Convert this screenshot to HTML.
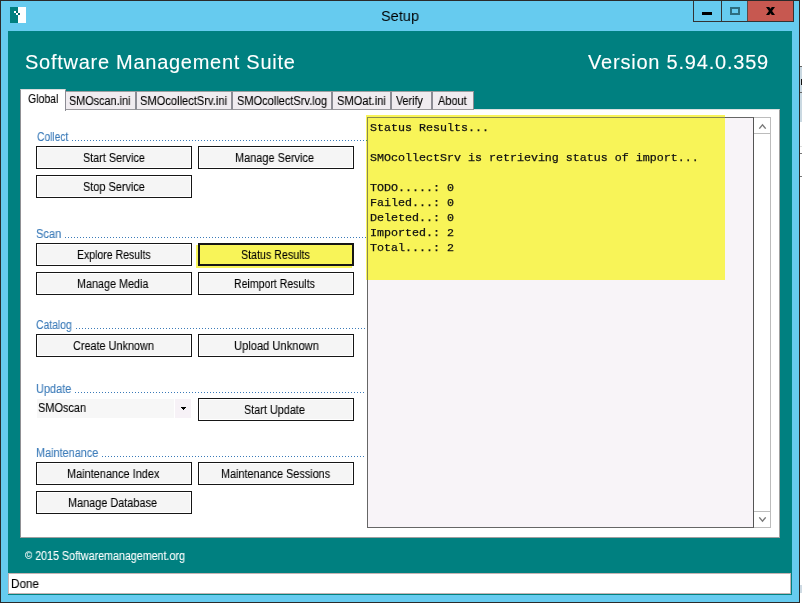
<!DOCTYPE html><html><head><meta charset="utf-8"><title>Setup</title><style>
*{box-sizing:border-box;margin:0;padding:0}
html,body{width:802px;height:605px;overflow:hidden;background:#fff}
body{position:relative;font-family:"Liberation Sans",sans-serif;font-size:12px;color:#000}
.abs{position:absolute}
.t{position:absolute;white-space:nowrap;line-height:1;will-change:transform;-webkit-text-stroke:0.1px}
#win{left:0;top:0;width:800px;height:603px;background:#66cbef;border:1px solid #2a2a2a}
#client{left:8px;top:31px;width:784px;height:564px;background:#008080}
#page{left:20px;top:109px;width:760px;height:429px;background:#fff;border:1px solid #a0a0a0;border-top-color:#d8e0e0;border-left-color:#909094}
.tab{position:absolute;top:91px;height:19px;background:#f0ecf0;border:1px solid #8c8c94;border-top-color:#9a9ea0;border-bottom-color:#98989c}
#tab0{left:20px;top:89px;width:46px;height:22px;background:#fff;border:1px solid #8c8c94;border-bottom:none;border-top-color:#d8dcdc;border-left-color:#909094}
.btn{position:absolute;width:156px;height:23px;background:#f5f5f5;border:1px solid #161616;box-shadow:inset 0 0 0 1px #fff}
.dots{position:absolute;height:1px;background:repeating-linear-gradient(90deg,#3a7ab8 0,#3a7ab8 1px,transparent 1px,transparent 3px)}
</style></head><body><div id="win" class="abs"></div>
<svg class="abs" style="left:10px;top:7px" width="16" height="16" shape-rendering="crispEdges"><rect width="8" height="16" fill="#008080"/><rect x="8" width="8" height="16" fill="#fff"/><rect x="4" y="4" width="2" height="2" fill="#fff"/><rect x="6" y="6" width="2" height="2" fill="#fff"/><rect x="8" y="6" width="2" height="2" fill="#006868"/><rect x="6" y="4" width="2" height="2" fill="#006868"/></svg>
<div class="abs" style="left:693px;top:1px;width:101px;height:21px;border:1px solid #333;border-top:none;background:#66cbef"></div>
<div class="abs" style="left:721px;top:1px;width:1px;height:20px;background:#333"></div>
<div class="abs" style="left:747px;top:1px;width:46px;height:20px;background:#c75850;border-left:1px solid #5a4a48"></div>
<div class="abs" style="left:702px;top:12px;width:10px;height:3px;background:#000"></div>
<div class="abs" style="left:730px;top:7px;width:10px;height:8px;border:2px solid #2d6d7e"></div>
<svg class="abs" style="left:765px;top:6px" width="12" height="11"><path d="M1 1 H4.2 L10 9 H6.8 Z M6.8 1 H10 L4.2 9 H1 Z" fill="#000"/></svg>
<div id="client" class="abs"></div>
<div id="page" class="abs"></div>
<div class="tab" style="left:66px;width:70px;border-left:none;"></div>
<div class="tab" style="left:136px;width:96px;"></div>
<div class="tab" style="left:232px;width:100px;"></div>
<div class="tab" style="left:332px;width:59px;"></div>
<div class="tab" style="left:391px;width:41px;"></div>
<div class="tab" style="left:432px;width:42px;"></div>
<div id="tab0" class="abs"></div>
<div class="dots" style="left:72px;top:140px;width:294px"></div>
<div class="dots" style="left:65px;top:237px;width:301px"></div>
<div class="dots" style="left:76px;top:328px;width:290px"></div>
<div class="dots" style="left:75px;top:392px;width:291px"></div>
<div class="dots" style="left:102px;top:456px;width:264px"></div>
<div class="abs" style="left:196px;top:245px;width:156px;height:23px;background:#f8f458"></div>
<div class="btn" style="left:36px;top:146px;"></div>
<div class="btn" style="left:198px;top:146px;"></div>
<div class="btn" style="left:36px;top:175px;"></div>
<div class="btn" style="left:36px;top:243px;"></div>
<div class="btn" style="left:198px;top:243px;background:#f8f458;border-width:2px;box-shadow:none;"></div>
<div class="btn" style="left:36px;top:272px;"></div>
<div class="btn" style="left:198px;top:272px;"></div>
<div class="btn" style="left:36px;top:334px;"></div>
<div class="btn" style="left:198px;top:334px;"></div>
<div class="btn" style="left:198px;top:398px;"></div>
<div class="btn" style="left:36px;top:462px;"></div>
<div class="btn" style="left:198px;top:462px;"></div>
<div class="btn" style="left:36px;top:491px;"></div>
<div class="abs" style="left:37px;top:399px;width:137px;height:19px;background:#f7f7f7"></div>
<div class="abs" style="left:175px;top:399px;width:16px;height:19px;background:#f7f2f7"></div>
<svg class="abs" style="left:181px;top:407px" width="5" height="3" shape-rendering="crispEdges"><path d="M0 0 H5 V1 H0 Z M1 1 H4 V2 H1 Z M2 2 H3 V3 H2 Z" fill="#000"/></svg>
<div class="abs" style="left:367px;top:117px;width:387px;height:411px;background:#f8f4f8;border:1px solid #666;border-right-color:#555"></div>
<div class="abs" style="left:754px;top:117px;width:17px;height:411px;background:#fff;border:1px solid #bcbcbc;border-left:none"></div>
<div class="abs" style="left:754px;top:133px;width:17px;height:1px;background:#bcbcbc"></div>
<div class="abs" style="left:754px;top:511px;width:17px;height:1px;background:#bcbcbc"></div>
<svg class="abs" style="left:758px;top:123px" width="9" height="6"><path d="M1.3 5.6 L4.5 1.9 L7.7 5.6" stroke="#7a7a7a" stroke-width="1.4" fill="none"/></svg>
<svg class="abs" style="left:758px;top:517px" width="9" height="6"><path d="M1.3 0.4 L4.5 4.1 L7.7 0.4" stroke="#7a7a7a" stroke-width="1.4" fill="none"/></svg>
<div class="abs" style="left:366px;top:115px;width:359px;height:165px;background:#f8f458"></div>
<div class="abs" style="left:366px;top:140px;width:1px;height:1px;background:#4a9a38"></div>
<div class="abs" style="left:367px;top:117px;width:1px;height:163px;background:#8a8a50"></div>
<div class="abs" style="left:367px;top:117px;width:358px;height:1px;background:#8a8a50"></div>
<pre class="abs" id="mono" style="will-change:transform;-webkit-text-stroke:0.25px;left:370px;top:121px;font-family:'Liberation Mono',monospace;font-size:11.667px;line-height:15px;color:#111">Status Results...

SMOcollectSrv is retrieving status of import...

TODO.....: 0
Failed...: 0
Deleted..: 0
Imported.: 2
Total....: 2</pre>
<div class="abs" style="left:8px;top:573px;width:783px;height:21px;background:#fff;border:1px solid #c4b4b4"></div>
<div class="abs" style="left:800px;top:66px;width:2px;height:56px;background:#cad9e2;border-top:1px solid #666"></div>
<div class="abs" style="left:800px;top:92px;width:2px;height:1px;background:#666"></div>
<div class="abs" style="left:800px;top:146px;width:2px;height:1px;background:#ddd"></div>
<div class="abs" style="left:800px;top:153px;width:2px;height:1px;background:#777"></div>
<div class="abs" style="left:800px;top:176px;width:2px;height:1px;background:#777"></div>
<div class="abs" style="left:801px;top:79px;width:1px;height:6px;background:#111"></div>
<div class="abs" style="left:800px;top:585px;width:2px;height:8px;background:#cfdbe4"></div>
<div class="t" id="title" style="left:380.83px;top:7.98px;font-size:15.5px;transform:scaleX(0.9368);transform-origin:0 0;-webkit-text-stroke:0;">Setup</div>
<div class="t" id="h1" style="left:24.66px;top:51.87px;font-size:20px;color:#fff;letter-spacing:0.729px;">Software Management Suite</div>
<div class="t" id="h2" style="left:588.00px;top:51.87px;font-size:20px;color:#fff;letter-spacing:0.791px;">Version 5.94.0.359</div>
<div class="t" id="tab0t" style="left:28.14px;top:92.84px;transform:scaleX(0.8754);transform-origin:0 0;">Global</div>
<div class="t" id="tab1t" style="left:69.32px;top:94.84px;transform:scaleX(0.9033);transform-origin:0 0;">SMOscan.ini</div>
<div class="t" id="tab2t" style="left:140.30px;top:94.84px;transform:scaleX(0.9276);transform-origin:0 0;">SMOcollectSrv.ini</div>
<div class="t" id="tab3t" style="left:237.20px;top:94.84px;transform:scaleX(0.9201);transform-origin:0 0;">SMOcollectSrv.log</div>
<div class="t" id="tab4t" style="left:337.20px;top:94.84px;transform:scaleX(0.9280);transform-origin:0 0;">SMOat.ini</div>
<div class="t" id="tab5t" style="left:395.72px;top:94.84px;transform:scaleX(0.8928);transform-origin:0 0;">Verify</div>
<div class="t" id="tab6t" style="left:437.72px;top:94.84px;transform:scaleX(0.9139);transform-origin:0 0;">About</div>
<div class="t" id="sec0" style="left:36.51px;top:130.84px;color:#3a7ab8;transform:scaleX(0.8535);transform-origin:0 0;">Collect</div>
<div class="t" id="sec1" style="left:36.33px;top:227.84px;color:#3a7ab8;transform:scaleX(0.9228);transform-origin:0 0;">Scan</div>
<div class="t" id="sec2" style="left:36.45px;top:318.84px;color:#3a7ab8;transform:scaleX(0.8637);transform-origin:0 0;">Catalog</div>
<div class="t" id="sec3" style="left:36.00px;top:382.84px;color:#3a7ab8;transform:scaleX(0.9128);transform-origin:0 0;">Update</div>
<div class="t" id="sec4" style="left:36.00px;top:446.84px;color:#3a7ab8;transform:scaleX(0.9070);transform-origin:0 0;">Maintenance</div>
<div class="t" id="btn0" style="left:82.69px;top:151.84px;transform:scaleX(0.9004);transform-origin:0 0;">Start Service</div>
<div class="t" id="btn1" style="left:235.10px;top:151.84px;transform:scaleX(0.9112);transform-origin:0 0;">Manage Service</div>
<div class="t" id="btn2" style="left:83.00px;top:180.84px;transform:scaleX(0.9101);transform-origin:0 0;">Stop Service</div>
<div class="t" id="btn3" style="left:76.84px;top:248.84px;transform:scaleX(0.8758);transform-origin:0 0;">Explore Results</div>
<div class="t" id="btn4" style="left:240.90px;top:248.84px;transform:scaleX(0.8898);transform-origin:0 0;">Status Results</div>
<div class="t" id="btn5" style="left:77.38px;top:277.84px;transform:scaleX(0.8994);transform-origin:0 0;">Manage Media</div>
<div class="t" id="btn6" style="left:234.30px;top:277.84px;transform:scaleX(0.8784);transform-origin:0 0;">Reimport Results</div>
<div class="t" id="btn7" style="left:72.98px;top:339.84px;transform:scaleX(0.9055);transform-origin:0 0;">Create Unknown</div>
<div class="t" id="btn8" style="left:233.56px;top:339.84px;transform:scaleX(0.9285);transform-origin:0 0;">Upload Unknown</div>
<div class="t" id="btn9" style="left:244.04px;top:403.84px;transform:scaleX(0.9041);transform-origin:0 0;">Start Update</div>
<div class="t" id="btn10" style="left:67.28px;top:467.84px;transform:scaleX(0.9111);transform-origin:0 0;">Maintenance Index</div>
<div class="t" id="btn11" style="left:221.00px;top:467.84px;transform:scaleX(0.9035);transform-origin:0 0;">Maintenance Sessions</div>
<div class="t" id="btn12" style="left:68.36px;top:496.84px;transform:scaleX(0.9074);transform-origin:0 0;">Manage Database</div>
<div class="t" id="combo" style="left:38.38px;top:401.84px;transform:scaleX(0.9132);transform-origin:0 0;">SMOscan</div>
<div class="t" id="copy" style="left:24.78px;top:549.84px;color:#fff;transform:scaleX(0.8906);transform-origin:0 0;"><span style="position:relative;top:-1px;font-size:11px">©</span> 2015 Softwaremanagement.org</div>
<div class="t" id="done" style="left:11.28px;top:577.84px;transform:scaleX(0.9747);transform-origin:0 0;">Done</div></body></html>
